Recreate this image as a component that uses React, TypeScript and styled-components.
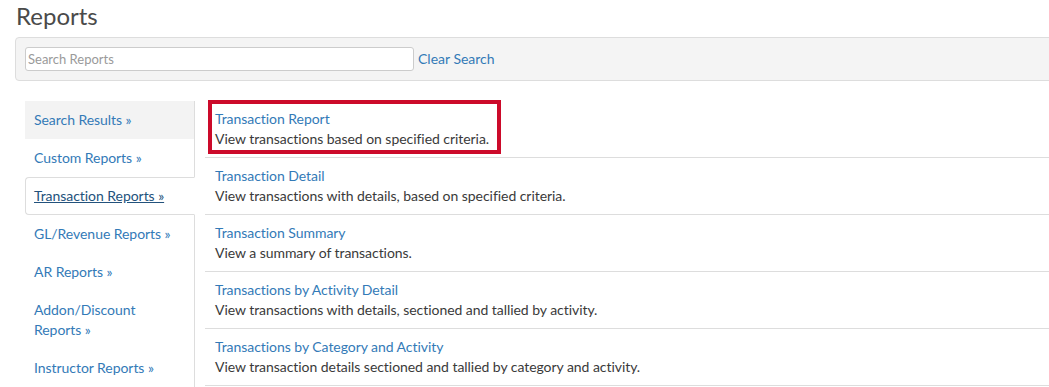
import React from "react";
import styled, { createGlobalStyle } from "styled-components";

const GlobalStyle = createGlobalStyle`
  html, body {
    margin: 0;
    padding: 0;
    background: #ffffff;
    overflow: hidden;
  }
  body {
    font-family: Lato, "Open Sans", Arial, sans-serif;
    font-size: 14px;
    line-height: 20px;
    color: #333333;
  }
  * { box-sizing: border-box; }
`;

const Page = styled.div`
  padding: 3px 0 0 15px;
  width: 100%;
`;

const Title = styled.h1`
  margin: 0 0 8px 1px;
  font-size: 24px;
  line-height: 26px;
  font-weight: 400;
  color: #4a4a4a;
`;

const SearchPanel = styled.div`
  display: flex;
  align-items: center;
  gap: 4px;
  margin-right: -10px;
  padding: 9px;
  background: #f4f4f4;
  border: 1px solid #dddddd;
  border-radius: 4px;
`;

const SearchInput = styled.input`
  width: 389px;
  height: 24px;
  padding: 0 2px;
  border: 1px solid #cccccc;
  border-radius: 3px;
  background: #ffffff;
  font-family: Lato, "Open Sans", Arial, sans-serif;
  font-size: 13px;
  color: #333333;
  &::placeholder {
    color: #9a9a9a;
  }
`;

const LinkText = styled.a`
  color: #337ab7;
  text-decoration: none;
  cursor: pointer;
`;

const Body = styled.div`
  display: flex;
  align-items: stretch;
  gap: 10px;
  margin: 20px 0 0 10px;
  letter-spacing: -0.05px;
`;

const Sidebar = styled.nav`
  flex: 0 0 170px;
  width: 170px;
  border-right: 1px solid #dddddd;
  min-height: 300px;
  display: flex;
  flex-direction: column;
`;

const SideItem = styled.a<{ $active?: boolean; $shaded?: boolean }>`
  display: block;
  padding: 8px 20px 8px 8px;
  border: 1px solid ${(p) => (p.$active ? "#dddddd" : "transparent")};
  border-right-color: transparent;
  border-radius: ${(p) => (p.$active ? "4px 0 0 4px" : "0")};
  margin-right: ${(p) => (p.$active ? "-1px" : "0")};
  background: ${(p) => (p.$shaded ? "#f3f3f3" : "#ffffff")};
  color: ${(p) => (p.$active ? "#23527c" : "#337ab7")};
  text-decoration: ${(p) => (p.$active ? "underline" : "none")};
  cursor: pointer;
`;

const Content = styled.div`
  flex: 1 1 auto;
  display: flex;
  flex-direction: column;
`;

const Row = styled.div`
  position: relative;
  padding: 8px 10px;
  border-bottom: 1px solid #dddddd;
`;

const RowTitle = styled(LinkText)`
  display: block;
`;

const RowDesc = styled.div`
  color: #3a3a3a;
`;

const Highlight = styled.div`
  position: absolute;
  left: 3px;
  top: -1px;
  width: 293px;
  height: 54px;
  border: 4px solid #cc0a2a;
  pointer-events: none;
`;

const sideItems = [
  { label: "Search Results »", shaded: true },
  { label: "Custom Reports »" },
  { label: "Transaction Reports »", active: true },
  { label: "GL/Revenue Reports »" },
  { label: "AR Reports »" },
  { label: "Addon/Discount Reports »" },
  { label: "Instructor Reports »" },
];

const reports = [
  {
    title: "Transaction Report",
    desc: "View transactions based on specified criteria.",
    highlight: true,
  },
  {
    title: "Transaction Detail",
    desc: "View transactions with details, based on specified criteria.",
  },
  {
    title: "Transaction Summary",
    desc: "View a summary of transactions.",
  },
  {
    title: "Transactions by Activity Detail",
    desc: "View transactions with details, sectioned and tallied by activity.",
  },
  {
    title: "Transactions by Category and Activity",
    desc: "View transaction details sectioned and tallied by category and activity.",
  },
];

export default function App() {
  return (
    <>
      <GlobalStyle />
      <Page>
        <Title>Reports</Title>
        <SearchPanel>
          <SearchInput placeholder="Search Reports" />
          <LinkText>Clear Search</LinkText>
        </SearchPanel>
        <Body>
          <Sidebar>
            {sideItems.map((it) => (
              <SideItem key={it.label} $active={it.active} $shaded={it.shaded}>
                {it.label}
              </SideItem>
            ))}
          </Sidebar>
          <Content>
            {reports.map((r) => (
              <Row key={r.title}>
                <RowTitle>{r.title}</RowTitle>
                <RowDesc>{r.desc}</RowDesc>
                {r.highlight && <Highlight />}
              </Row>
            ))}
          </Content>
        </Body>
      </Page>
    </>
  );
}
